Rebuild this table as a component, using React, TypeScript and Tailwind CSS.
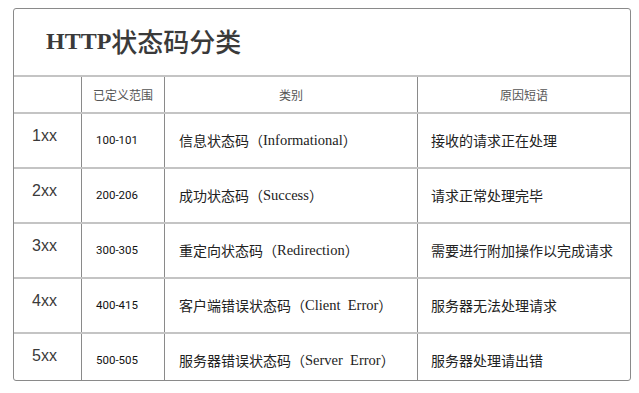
import React from "react";

const rows = [
  { code: "1xx", range: "100-101", cn: "信息状态码", en: "Informational", reason: "接收的请求正在处理" },
  { code: "2xx", range: "200-206", cn: "成功状态码", en: "Success", reason: "请求正常处理完毕" },
  { code: "3xx", range: "300-305", cn: "重定向状态码", en: "Redirection", reason: "需要进行附加操作以完成请求" },
  { code: "4xx", range: "400-415", cn: "客户端错误状态码", en: "Client\u00a0 Error", reason: "服务器无法处理请求" },
  { code: "5xx", range: "500-505", cn: "服务器错误状态码", en: "Server\u00a0 Error", reason: "服务器处理请出错" },
];

const cjk = { fontFamily: '"Noto Sans CJK SC", "Noto Sans", sans-serif' };

export default function App() {
  return (
    <div className="w-[639px] h-[393px] bg-white pl-[13px] pt-[8px]">
      <div className="w-[618px] h-[373px] border border-[#8a8a8a] rounded-[3px] overflow-hidden flex flex-col">
        <div className="h-[66px] shrink-0 flex items-center pl-[32px] pb-[2px] text-[#3a3a3a]">
          <span className="font-bold text-[24px] leading-none" style={{ fontFamily: '"Liberation Serif", serif' }}>HTTP</span>
          <span className="text-[26px] leading-none font-medium" style={{ fontFamily: '"Noto Sans CJK SC", sans-serif' }}>状态码分类</span>
        </div>
        <div className="h-[37px] shrink-0 border-t-2 border-[#c4c4c4] flex text-[12px] text-[#555]" style={cjk}>
          <div className="w-[67px] shrink-0" />
          <div className="w-[83px] shrink-0 border-l border-[#8a8a8a] flex items-center justify-center">已定义范围</div>
          <div className="w-[253px] shrink-0 border-l border-[#8a8a8a] flex items-center justify-center">类别</div>
          <div className="w-[213px] shrink-0 border-l border-[#8a8a8a] flex items-center justify-center">原因短语</div>
        </div>
        {rows.map((r) => (
          <div key={r.code} className="h-[55px] shrink-0 border-t-2 border-[#c4c4c4] flex text-[#222]">
            <div
              className="w-[67px] shrink-0 flex items-center pl-[18px] pb-[9px] text-[16px] text-[#3a3a3a]"
              style={{ fontFamily: '"Liberation Sans", sans-serif' }}
            >
              {r.code}
            </div>
            <div
              className="w-[83px] shrink-0 border-l border-[#8a8a8a] flex items-center pl-[14px] text-[11.5px] text-[#111]"
              style={{ fontFamily: 'Roboto, "Liberation Sans", sans-serif' }}
            >
              {r.range}
            </div>
            <div className="w-[253px] shrink-0 border-l border-[#8a8a8a] flex items-center pl-[14px] text-[14px] whitespace-nowrap" style={cjk}>
              <span>{r.cn}（</span>
              <span className="text-[14.5px]" style={{ fontFamily: '"Liberation Serif", serif' }}>{r.en}</span>
              <span>）</span>
            </div>
            <div className="w-[213px] shrink-0 border-l border-[#8a8a8a] flex items-center pl-[13px] text-[14px] whitespace-nowrap" style={cjk}>
              {r.reason}
            </div>
          </div>
        ))}
      </div>
    </div>
  );
}
